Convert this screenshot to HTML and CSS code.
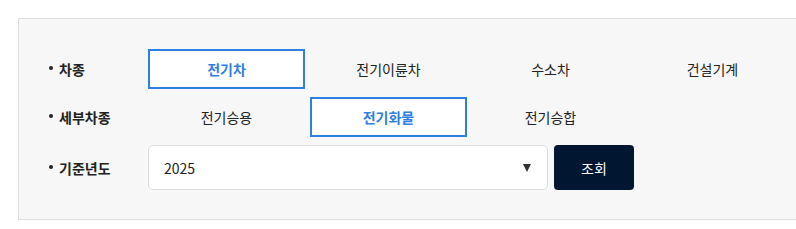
FILE: index.html
```html
<!DOCTYPE html>
<html lang="ko">
<head>
    <meta charset="UTF-8">
    <title>차종 조회</title>
    <link rel="stylesheet" href="styles.css">
</head>
<body>
    <div class="search-box">
        <div class="row">
            <div class="label">차종</div>
            <div class="options">
                <button class="opt active">전기차</button>
                <button class="opt">전기이륜차</button>
                <button class="opt">수소차</button>
                <button class="opt">건설기계</button>
            </div>
        </div>
        <div class="row">
            <div class="label">세부차종</div>
            <div class="options">
                <button class="opt">전기승용</button>
                <button class="opt active">전기화물</button>
                <button class="opt">전기승합</button>
            </div>
        </div>
        <div class="row row-year">
            <div class="label">기준년도</div>
            <div class="select">
                <span>2025</span>
                <span class="arrow"></span>
            </div>
            <button class="btn-search">조회</button>
        </div>
    </div>
</body>
</html>
```

FILE: styles.css
```css
body {
    margin: 0;
    padding: 18px 0 18px 18px;
    font-family: "Noto Sans CJK KR", "Noto Sans", sans-serif;
    color: #222;
    background-color: #fff;
}
.search-box {
    background-color: #f7f7f7;
    border: 1px solid #ddd;
    border-right: none;
    padding: 30px 0 29px 29px;
}
.row {
    display: flex;
    align-items: center;
    height: 40px;
    margin-bottom: 8px;
}
.row-year {
    height: 45px;
    margin-bottom: 0;
}
.label {
    width: 100px;
    font-size: 14px;
    font-weight: bold;
    display: flex;
    align-items: center;
}
.label::before {
    content: "";
    width: 4px;
    height: 4px;
    border-radius: 50%;
    background-color: #222;
    margin: 0 6px 2px 1px;
}
.options {
    display: flex;
    gap: 5px;
}
.opt {
    width: 157px;
    height: 40px;
    border: 2px solid transparent;
    background: none;
    font-family: inherit;
    font-size: 14px;
    color: #222;
    cursor: pointer;
}
.opt.active {
    border-color: #2f7fe0;
    background-color: #fff;
    color: #2f7fe0;
    font-weight: bold;
}
.select {
    width: 400px;
    height: 45px;
    box-sizing: border-box;
    background-color: #fff;
    border: 1px solid #ddd;
    border-radius: 5px;
    padding: 0 16px 0 15px;
    display: flex;
    align-items: center;
    justify-content: space-between;
    font-size: 14px;
}
.arrow {
    width: 0;
    height: 0;
    border-left: 4.5px solid transparent;
    border-right: 4.5px solid transparent;
    border-top: 8px solid #333;
}
.btn-search {
    margin-left: 6px;
    width: 80px;
    height: 45px;
    border: none;
    border-radius: 4px;
    background-color: #001631;
    color: #fff;
    font-family: inherit;
    font-size: 14px;
    cursor: pointer;
}
```
